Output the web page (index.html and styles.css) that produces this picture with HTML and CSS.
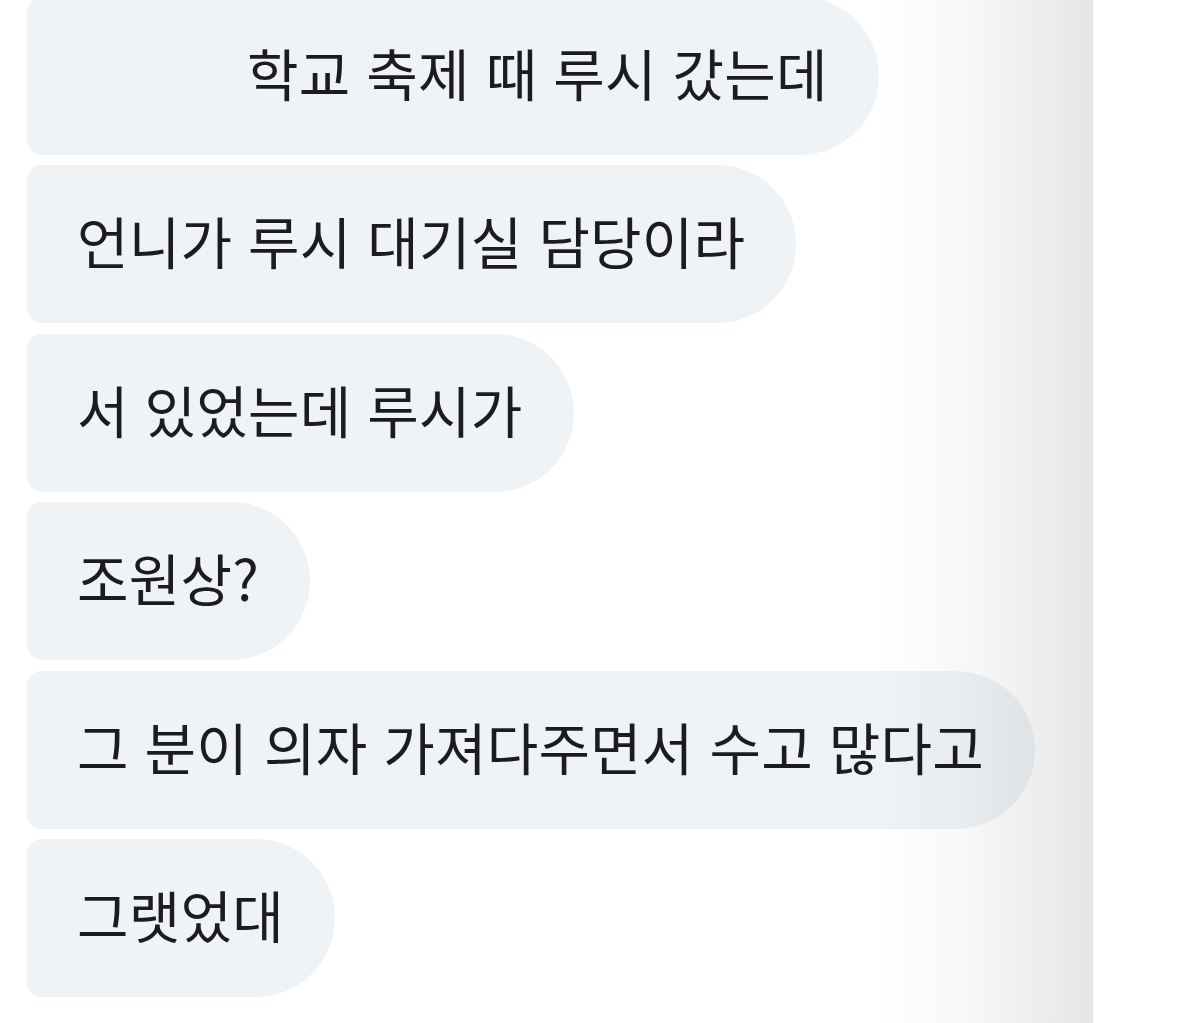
FILE: index.html
```html
<!DOCTYPE html>
<html lang="ko">
<head>
    <meta charset="UTF-8">
    <meta name="viewport" content="width=device-width, initial-scale=1.0">
    <title>대화</title>
    <link rel="stylesheet" href="styles.css">
</head>
<body>

    <div class="chat-panel">
        <!-- messages, oldest first -->
        <div class="bubble first">학교 축제 때 루시 갔는데</div>
        <div class="bubble">언니가 루시 대기실 담당이라</div>
        <div class="bubble">서 있었는데 루시가</div>
        <div class="bubble">조원상?</div>
        <div class="bubble">그 분이 의자 가져다주면서 수고 많다고</div>
        <div class="bubble">그랫었대</div>
    </div>

</body>
</html>
```

FILE: styles.css
```css
body {
    margin: 0;
    padding: 0;
    background-color: #ffffff;
    font-family: "Noto Sans CJK KR", "Noto Sans", sans-serif;
    color: #1c1c1e;
    overflow: hidden;
}

.chat-panel {
    position: relative;
    width: 1093px;
    height: 1030px;
    margin-top: -3.5px;
    padding-left: 27px;
    box-sizing: border-box;
    display: flex;
    flex-direction: column;
    align-items: flex-start;
    gap: 10.5px;
    background-color: #ffffff;
}

/* soft shade along the right edge of the screen */
.chat-panel::after {
    content: "";
    position: absolute;
    top: 0;
    right: 0;
    bottom: 0;
    width: 220px;
    background: linear-gradient(to right, rgba(0, 0, 0, 0) 0%, rgba(0, 0, 0, 0.03) 45%, rgba(0, 0, 0, 0.1) 100%);
    pointer-events: none;
}

.bubble {
    height: 158px;
    display: flex;
    align-items: center;
    padding: 0 51px 8px 50px;
    box-sizing: border-box;
    background-color: #eff3f6;
    border-radius: 15px 79px 79px 15px;
    font-size: 56px;
    letter-spacing: 0.2px;
    line-height: 1;
    white-space: nowrap;
}

.bubble.first {
    padding-left: 220px;
}
```
